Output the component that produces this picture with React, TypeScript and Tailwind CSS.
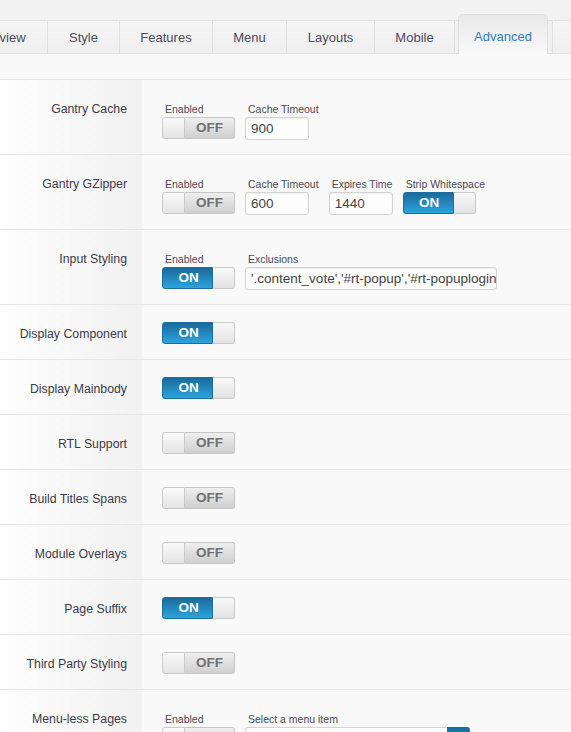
import React from "react";

function Toggle({ on }: { on: boolean }) {
  if (on) {
    return (
      <div className="flex h-[22px] w-[73px]">
        <div className="flex w-[51px] items-center justify-center rounded-l-[3px] border border-[#1c6c9c] bg-gradient-to-b from-[#1b6a9b] to-[#2ca4dc] pl-[2px] pt-[1px] text-[13.5px] font-bold text-white">
          ON
        </div>
        <div className="w-[22px] rounded-r-[3px] border border-l-0 border-[#cacaca] bg-gradient-to-b from-[#f9f9f9] to-[#e2e2e2]" />
      </div>
    );
  }
  return (
    <div className="flex h-[22px] w-[73px]">
      <div className="w-[23px] rounded-l-[3px] border border-[#cacaca] bg-gradient-to-b from-[#fafafa] to-[#e4e4e4]" />
      <div className="flex w-[50px] items-center justify-center rounded-r-[3px] border border-l-0 border-[#c6c6c6] bg-gradient-to-b from-[#efefef] to-[#cfcfcf] text-[13.5px] font-bold text-[#707070]">
        OFF
      </div>
    </div>
  );
}

function Field({ label, children }: { label: string; children: React.ReactNode }) {
  return (
    <div className="flex flex-col">
      <div className="mb-[1px] whitespace-nowrap pl-[3px] text-[10.5px] leading-[13px] text-[#4a4a55]">{label}</div>
      {children}
    </div>
  );
}

function TextInput({ value, w }: { value: string; w: string }) {
  return (
    <div
      className={`h-[23px] ${w} overflow-hidden whitespace-nowrap rounded-[3px] border border-[#d3d3d3] bg-[#fdfdfd] px-[5px] text-[13.5px] leading-[21px] text-[#444] shadow-[inset_0_1px_2px_rgba(0,0,0,0.06)]`}
    >
      {value}
    </div>
  );
}

function Row({ label, multi, children }: { label: string; multi?: boolean; children: React.ReactNode }) {
  return (
    <div className={`flex border-b border-[#e6e6e6] ${multi ? "h-[75px]" : "h-[55px]"}`}>
      <div className="w-[142px] shrink-0 bg-gradient-to-r from-[#fefefe] to-[#f1f1f1] pr-[15px] pt-[22px] text-right text-[12.3px] leading-[15px] text-[#3c3c4a]">
        {label}
      </div>
      <div className={`flex flex-1 gap-[10px] pl-[20px] ${multi ? "pt-[23px]" : "pt-[17px]"}`}>{children}</div>
    </div>
  );
}

export default function App() {
  const tabBase =
    "flex h-[34px] shrink-0 items-center justify-center border-y border-r border-y-[#e2e2e2] border-r-[#e0e0e0] bg-gradient-to-b from-[#f5f5f5] to-[#efefef] pt-[2px] text-[13px] text-[#4a4a5a]";
  return (
    <div className="h-[732px] w-[571px] overflow-hidden bg-[#f9f9f9] font-['Liberation_Sans',Arial,sans-serif]">
      <div className="bg-[#f2f2f2] pt-[14px]">
        <div className="flex h-[40px] items-end">
          <div className={`${tabBase} ml-[-50px] w-[98px]`}>Overview</div>
          <div className={`${tabBase} w-[72px]`}>Style</div>
          <div className={`${tabBase} w-[93px]`}>Features</div>
          <div className={`${tabBase} w-[74px]`}>Menu</div>
          <div className={`${tabBase} w-[88px]`}>Layouts</div>
          <div className={`${tabBase} w-[80px]`}>Mobile</div>
          <div className="h-[34px] w-[3px] shrink-0 border-y border-[#e2e2e2] bg-[#f1f1f1]" />
          <div className="h-[40px] w-[90px] shrink-0 rounded-t-[5px] border border-b-0 border-[#e0e0e0] bg-gradient-to-b from-[#e9e9e9] to-[#f9f9f9] pt-[14px] text-center text-[13px] leading-[16px] text-[#2b83bd]">
            Advanced
          </div>
          <div className="h-[34px] w-[4px] shrink-0 border-b border-t border-[#e2e2e2] bg-[#f1f1f1]" />
          <div className="h-[34px] w-[60px] shrink-0 border-y border-l border-[#e0e0e0] bg-gradient-to-b from-[#f5f5f5] to-[#efefef]" />
        </div>
      </div>
      <div className="h-[26px] border-b border-[#e6e6e6] bg-[#f9f9f9]" />

      <Row label="Gantry Cache" multi>
        <Field label="Enabled">
          <Toggle on={false} />
        </Field>
        <Field label="Cache Timeout">
          <TextInput value="900" w="w-[64px]" />
        </Field>
      </Row>
      <Row label="Gantry GZipper" multi>
        <Field label="Enabled">
          <Toggle on={false} />
        </Field>
        <Field label="Cache Timeout">
          <TextInput value="600" w="w-[64px]" />
        </Field>
        <Field label="Expires Time">
          <TextInput value="1440" w="w-[64px]" />
        </Field>
        <Field label="Strip Whitespace">
          <Toggle on={true} />
        </Field>
      </Row>
      <Row label="Input Styling" multi>
        <Field label="Enabled">
          <Toggle on={true} />
        </Field>
        <Field label="Exclusions">
          <TextInput value="'.content_vote','#rt-popup','#rt-popuplogin'" w="w-[252px]" />
        </Field>
      </Row>
      <Row label="Display Component">
        <Toggle on={true} />
      </Row>
      <Row label="Display Mainbody">
        <Toggle on={true} />
      </Row>
      <Row label="RTL Support">
        <Toggle on={false} />
      </Row>
      <Row label="Build Titles Spans">
        <Toggle on={false} />
      </Row>
      <Row label="Module Overlays">
        <Toggle on={false} />
      </Row>
      <Row label="Page Suffix">
        <Toggle on={true} />
      </Row>
      <Row label="Third Party Styling">
        <Toggle on={false} />
      </Row>
      <Row label="Menu-less Pages" multi>
        <Field label="Enabled">
          <Toggle on={false} />
        </Field>
        <Field label="Select a menu item">
          <div className="flex h-[23px] w-[225px]">
            <div className="flex-1 rounded-l-[3px] border border-r-0 border-[#d3d3d3] bg-[#fdfdfd]" />
            <div className="flex w-[23px] items-center justify-center rounded-r-[3px] bg-gradient-to-b from-[#1b6a9b] to-[#2ca4dc] text-[12px] font-bold text-white">
              +
            </div>
          </div>
        </Field>
      </Row>
    </div>
  );
}
